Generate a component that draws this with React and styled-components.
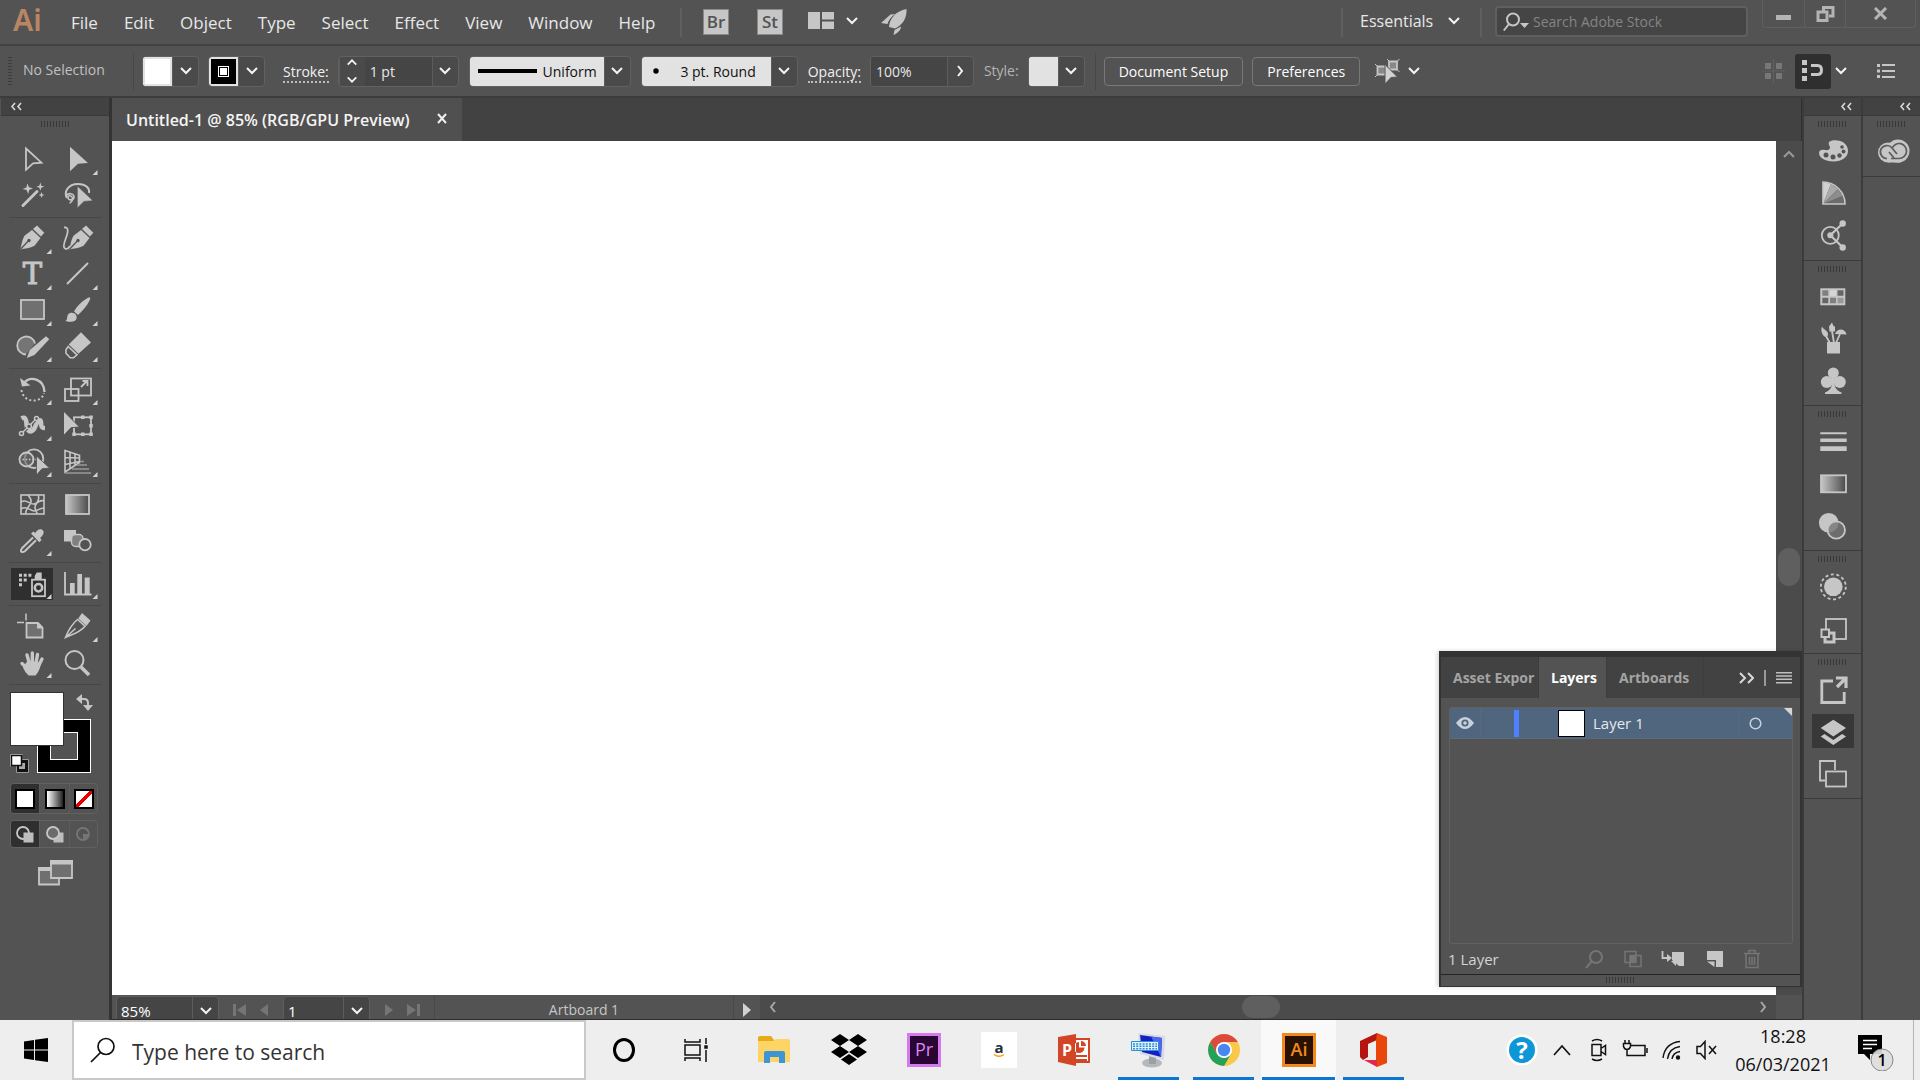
import React, { useState } from "react";
import styled, { createGlobalStyle, css } from "styled-components";

const ICON = "#c6c6c6";
const BG = "#535353";

const GlobalStyle = createGlobalStyle`
  * {
    box-sizing: border-box;
  }
  body {
    margin: 0;
    background: ${BG};
    font-family: "Open Sans", "Noto Sans", sans-serif;
    font-size: 15px;
    color: #e8e8e8;
  }
  button, input, select {
    margin: 0;
    padding: 0;
    border: none;
    border-radius: 0;
    background: none;
    color: inherit;
    font: inherit;
    outline: none;
  }
  select {
    appearance: none;
  }
  svg {
    display: block;
    flex: none;
  }
`;

const Screen = styled.div`
  display: flex;
  flex-direction: column;
  height: 100vh;
  overflow: hidden;
`;

const GradientDefs = styled.svg`
  position: absolute;
`;

/* ---------- menu bar ---------- */

const MenuBar = styled.header`
  display: flex;
  flex: none;
  height: 46px;
  border-bottom: 2px solid #424242;
`;

const AppName = styled.div`
  width: 58px;
  padding-left: 13px;
  font-family: "Noto Sans", sans-serif;
  font-size: 30px;
  font-weight: 600;
  line-height: 40px;
  color: #b98563;
`;

const MenuNav = styled.nav`
  display: flex;
  margin-right: 12px;
`;

const MenuItem = styled.button`
  padding: 0 13px;
  font-size: 17px;
`;

const MenuRule = styled.span`
  width: 2px;
  height: 29px;
  margin-top: 8px;
  background: #5f5f5f;
`;

const AppLinks = styled.div`
  display: flex;
  flex: 1;
  align-items: flex-start;
  gap: 22px;
  padding: 9px 0 0 18px;
`;

const IconButton = styled.button`
  display: flex;
  align-items: center;
  gap: ${({ $gap }) => $gap || 0}px;
  margin-left: ${({ $before }) => $before || 0}px;
`;

const Workspace = styled.label`
  display: flex;
  align-items: center;
  width: 137px;
  height: 41px;
  padding: 0 19px 0 17px;

  select {
    flex: 1;
    min-width: 0;
    font-size: 16px;
  }
`;

const StockSearch = styled.label`
  display: flex;
  align-items: center;
  width: 253px;
  height: 31px;
  margin: 6px 14px 0 13px;
  padding-left: 6px;
  gap: 4px;
  border: 2px solid #5f5f5f;
  border-radius: 4px;
  background: #454545;

  input {
    flex: 1;
    min-width: 0;
    font-size: 14px;
  }
  input::placeholder {
    color: #848484;
    opacity: 1;
  }
`;

const WindowButtons = styled.div`
  display: flex;
  height: 28px;
  margin-right: 4px;
  border: 1px solid #5f5f5f;
  border-top: none;
  border-radius: 0 0 4px 4px;
`;

const WindowButton = styled.button`
  display: flex;
  align-items: center;
  justify-content: center;
  width: ${({ $wide }) => ($wide ? 70 : 41)}px;

  & + & {
    border-left: 1px solid #5f5f5f;
  }
`;

/* ---------- control bar ---------- */

const ControlBar = styled.section`
  display: flex;
  flex: none;
  align-items: center;
  height: 52px;
  padding: 0 24px 0 8px;
  border-bottom: 2px solid #3c3c3c;
  font-size: 14px;
`;

const SideGrip = styled.span`
  width: 4px;
  height: 29px;
  background: repeating-linear-gradient(#3c3c3c 0 1px, transparent 1px 3px);
`;

const SelectionState = styled.span`
  width: 121px;
  padding: 0 0 4px 11px;
  color: #c0c0c0;
`;

const ControlRule = styled.span`
  width: 1px;
  height: 37px;
  margin-right: 8px;
  background: #474747;
`;

const Combo = styled.div`
  display: flex;
  flex: none;
  width: ${({ $width }) => $width}px;
  height: 31px;
  margin-right: ${({ $after }) => $after || 10}px;
  border: 1px solid #616161;
  border-radius: 4px;
  background: #4a4a4a;
  overflow: hidden;

  input {
    flex: 1;
    min-width: 0;
    padding-left: 5px;
    background: #454545;
  }
`;

const ComboArrow = styled.button`
  display: flex;
  flex: none;
  flex-direction: column;
  align-items: center;
  justify-content: center;
  gap: 6px;
  width: 26px;
  border-left: 1px solid #5c5c5c;
`;

const Swatch = styled.button`
  display: flex;
  align-items: center;
  justify-content: center;
  width: 29px;
  border: 2px solid #e2e2e2;
  background: ${({ $color }) => $color};
`;

const SwatchHole = styled.span`
  width: 11px;
  height: 11px;
  border: 1px solid #fff;
  background: #fff;
  box-shadow: inset 0 0 0 1px #000;
`;

const Preset = styled.label`
  display: flex;
  flex: 1;
  align-items: center;
  background: #e2e2e2;
  color: #111;

  svg {
    margin-left: 8px;
  }
  select {
    flex: 1;
    min-width: 0;
    padding-right: ${({ $end }) => $end}px;
    text-align-last: right;
  }
`;

const FieldLabel = styled.label`
  margin-right: 9px;
  line-height: 18px;
  color: ${({ $dim }) => ($dim ? "#b4b4b4" : "#f2f2f2")};
  ${({ $dim }) =>
    !$dim &&
    css`
      margin-top: 3px;
      border-bottom: 2px dotted #bdbdbd;
    `}
`;

const OutlineButton = styled.button`
  height: 29px;
  margin-right: 9px;
  padding: 0 14px;
  border: 1px solid #787878;
  border-radius: 4px;
  color: #fff;
`;

const Spacer = styled.span`
  flex: 1;
`;

const SnapButton = styled.button`
  display: flex;
  align-items: center;
  justify-content: center;
  width: 36px;
  height: 35px;
  margin: 0 3px 0 10px;
  border-radius: 3px;
  background: #2f2f2f;
`;

/* ---------- tools ---------- */

const Main = styled.main`
  display: flex;
  flex: 1;
  min-height: 0;
`;

const Tools = styled.aside`
  display: flex;
  flex: none;
  flex-direction: column;
  width: 112px;
  padding-left: 1px;
  border-right: 3px solid #333;
`;

const PanelHead = styled.button`
  display: flex;
  flex: none;
  align-items: center;
  justify-content: ${({ $end }) => ($end ? "flex-end" : "flex-start")};
  height: 18px;
  padding: 0 9px;
  background: #424242;
  border-bottom: 1px solid #3a3a3a;
`;

const Grip = styled.span`
  display: block;
  width: 29px;
  height: 6px;
  margin: ${({ $top }) => $top}px auto ${({ $bottom }) => $bottom || 0}px;
  background: repeating-linear-gradient(90deg, #383838 0 1px, transparent 1px 3px);
`;

const ToolGroup = styled.div`
  display: grid;
  grid-template-columns: 46px 46px;
  margin: 0 8px;
  padding-bottom: 3px;
  margin-bottom: 3px;
  border-bottom: 1px solid #474747;
`;

const ToolButton = styled.button`
  height: 36px;
  background: ${({ $active }) =>
    $active
      ? "linear-gradient(#2f2f2f, #2f2f2f) 2px 2px / 42px 32px no-repeat"
      : "none"};
`;

const FillStroke = styled.div`
  position: relative;
  height: 82px;
  margin: 4px 0 9px 9px;
`;

const FillBox = styled.button`
  position: absolute;
  top: 0;
  left: 0;
  width: 54px;
  height: 54px;
  border: 1px solid #333;
  background: #fff;
`;

const StrokeBox = styled.button`
  position: absolute;
  top: 27px;
  left: 27px;
  width: 54px;
  height: 54px;
  padding: 12px;
  border: 1px solid #fff;
  background: #000;

  span {
    display: block;
    height: 28px;
    border: 1px solid #fff;
    background: ${BG};
  }
`;

const SwapButton = styled.button`
  position: absolute;
  top: 2px;
  right: 16px;
`;

const DefaultButton = styled.button`
  position: absolute;
  top: 62px;
  left: 0;
`;

const Segments = styled.div`
  display: grid;
  grid-template-columns: 28px 30px 28px;
  height: ${({ $height }) => $height}px;
  margin: 0 auto 6px 9px;
  border: 1px solid #616161;
  border-radius: 4px;
  overflow: hidden;
`;

const Segment = styled.button`
  display: flex;
  align-items: center;
  justify-content: center;
  background: ${({ $active }) => ($active ? "#2f2f2f" : "none")};

  & + & {
    border-left: 1px solid #5c5c5c;
  }
`;

const PaintChip = styled.span`
  width: 20px;
  height: 20px;
  border: 2px solid #000;
  background: ${({ $paint }) => $paint};
`;

const ScreenMode = styled.button`
  align-self: center;
  margin-top: 6px;
`;

/* ---------- document ---------- */

const DocumentArea = styled.section`
  position: relative;
  display: flex;
  flex: 1;
  flex-direction: column;
  min-width: 0;
`;

const TabBar = styled.div`
  display: flex;
  flex: none;
  height: 43px;
  border-right: 1px solid #2f2f2f;
  background: #424242;
`;

const DocTab = styled.div`
  display: flex;
  align-items: center;
  justify-content: space-between;
  width: 350px;
  padding: 0 11px 0 14px;
  background: #505050;
  font-size: 16px;
  font-weight: 600;
  white-space: nowrap;
  color: #f4f4f4;
`;

const CanvasRow = styled.div`
  display: flex;
  flex: 1;
  min-height: 0;
`;

const Canvas = styled.div`
  flex: 1;
  background: #fff;
`;

const VerticalScroll = styled.div`
  display: flex;
  flex-direction: column;
  align-items: center;
  width: 26px;
  padding-top: 6px;
  background: #4b4b4b;
`;

const Thumb = styled.span`
  width: ${({ $width }) => $width}px;
  height: ${({ $height }) => $height}px;
  border-radius: 12px;
  background: #5f5f5f;
`;

const ThumbTrack = styled.div`
  display: flex;
  flex: 1;
  flex-direction: ${({ $vertical }) => ($vertical ? "column" : "row")};
  align-items: center;

  &::before {
    content: "";
    flex: ${({ $before }) => $before};
  }
  &::after {
    content: "";
    flex: ${({ $after }) => $after};
  }
`;

const StatusBar = styled.footer`
  display: flex;
  flex: none;
  height: 25px;
  padding-left: 4px;
  border-bottom: 1px solid #2d2d2d;
  overflow: hidden;
`;

const StatusField = styled.div`
  display: flex;
  width: ${({ $width }) => $width}px;
  height: 32px;
  margin-top: 1px;
  border: 1px solid #5f5f5f;
  border-radius: 4px;
  background: #454545;

  input {
    flex: 1;
    min-width: 0;
    height: 27px;
    padding-left: 4px;
    color: #fff;
  }
  button {
    height: 27px;
  }
`;

const Pager = styled.div`
  display: flex;
  align-items: center;
  gap: 13px;
  padding: 5px 14px 0;
`;

const ArtboardName = styled.div`
  width: 300px;
  border: 1px solid #4a4a4a;
  border-width: 0 1px;
  text-align: center;
  font-size: 14px;
  line-height: 29px;
  color: #c6c6c6;
`;

const StatusMenu = styled.button`
  display: flex;
  align-items: center;
  justify-content: center;
  width: 26px;
  padding-top: 5px;
`;

const HorizontalScroll = styled.div`
  display: flex;
  flex: 1;
  align-items: center;
  padding: 0 6px;
  background: #4b4b4b;
`;

const ScrollCorner = styled.div`
  width: 26px;
`;

/* ---------- layers panel ---------- */

const LayersPanel = styled.section`
  position: absolute;
  right: 0;
  bottom: 33px;
  display: flex;
  flex-direction: column;
  width: 363px;
  height: 336px;
  border: 2px solid #333;
  border-top: 6px solid #333;
  border-bottom-width: 1px;
  background: ${BG};
  box-shadow: -2px 0 4px rgba(0, 0, 0, 0.15);
`;

const PanelTabs = styled.div`
  display: flex;
  flex: none;
  align-items: center;
  height: 41px;
  background: #424242;
`;

const PanelTab = styled.button`
  width: ${({ $width }) => $width}px;
  height: 41px;
  padding-left: 12px;
  text-align: left;
  white-space: nowrap;
  font-size: 14px;
  font-weight: 700;
  color: ${({ $active }) => ($active ? "#fff" : "#a4a4a4")};
  background: ${({ $active }) => ($active ? BG : "none")};
  border-right: 1px solid #3d3d3d;
`;

const PanelActions = styled.div`
  display: flex;
  flex: 1;
  align-items: center;
  justify-content: flex-end;
  gap: 10px;
  padding-right: 8px;
`;

const LayerList = styled.div`
  flex: 1;
  margin: 9px 7px 0 8px;
  border: 1px solid #616161;
  border-radius: 3px;
`;

const LayerRow = styled.div`
  position: relative;
  display: flex;
  align-items: center;
  height: 31px;
  background: #50667e;
  border-bottom: 1px solid #5c6c7c;
  color: #e4e9ee;
`;

const EyeCell = styled.button`
  display: flex;
  align-items: center;
  justify-content: center;
  width: 31px;
  height: 29px;
  border-right: 1px solid #5b6a7a;
`;

const LayerColor = styled.span`
  width: 5px;
  height: 27px;
  margin: 0 39px 0 33px;
  background: #4f80ff;
`;

const LayerThumb = styled.span`
  width: 27px;
  height: 27px;
  margin-right: 8px;
  border: 1px solid #000;
  background: #fff;
`;

const TargetCell = styled.button`
  display: flex;
  align-items: center;
  width: 54px;
  height: 29px;
  margin-left: auto;
  padding-left: 10px;
  border-left: 1px solid #5b6a7a;
`;

const ActiveCorner = styled.span`
  position: absolute;
  top: 0;
  right: 0;
  border: 4px solid;
  border-color: #d6d6d6 #d6d6d6 transparent transparent;
`;

const LayersFooter = styled.div`
  display: flex;
  flex: none;
  align-items: center;
  gap: 17px;
  height: 31px;
  padding: 0 39px 0 7px;
  border-bottom: 1px solid #242424;
  color: #d4d4d4;

  span {
    flex: 1;
  }
`;

const PanelResize = styled.div`
  flex: none;
  height: 11px;
`;

/* ---------- docks ---------- */

const Dock = styled.aside`
  display: flex;
  flex: none;
  flex-direction: column;
  width: 59px;
  border-left: 2px solid #3b3b3b;
`;

const DockGroup = styled.div`
  display: flex;
  flex-direction: column;
  align-items: center;
  padding-bottom: 4px;
  border-bottom: 1px solid #3b3b3b;
`;

const DockGrip = styled.div`
  height: 14px;
`;

const DockButton = styled.button`
  width: 42px;
  height: 42px;
  border-radius: 3px;
  background: ${({ $active }) =>
    $active
      ? "linear-gradient(#383838, #383838) 0 4px / 42px 34px no-repeat"
      : "none"};
`;

/* ---------- taskbar ---------- */

const Taskbar = styled.footer`
  display: flex;
  flex: none;
  height: 60px;
  background: #eee;
  color: #111;
`;

const StartButton = styled.button`
  display: flex;
  align-items: center;
  justify-content: center;
  width: 72px;
`;

const TaskSearch = styled.label`
  display: flex;
  align-items: center;
  gap: 16px;
  width: 514px;
  padding-left: 16px;
  border: 2px solid #c9c9c9;
  background: #fff;

  input {
    flex: 1;
    min-width: 0;
    padding-top: 3px;
    font-size: 21px;
  }
  input::placeholder {
    color: #333;
    opacity: 1;
  }
`;

const TaskApps = styled.div`
  display: flex;
  flex: 1;
`;

const TaskApp = styled.button`
  display: flex;
  align-items: center;
  justify-content: center;
  width: 75px;
  border-top: 3px solid transparent;
  border-bottom: 3px solid transparent;
  background: ${({ $active }) => ($active ? "#f9f9f9" : "none")};
  ${({ $running, $active }) =>
    $running &&
    css`
      border-image: linear-gradient(
          90deg,
          transparent ${$active ? 1 : 7}px,
          #0c76d4 ${$active ? 1 : 7}px ${$active ? 74 : 68}px,
          transparent ${$active ? 74 : 68}px
        )
        0 0 3 0;
    `}
`;

const Tray = styled.div`
  display: flex;
  align-items: center;
  gap: 14px;
`;

const Clock = styled.time`
  display: flex;
  flex-direction: column;
  justify-content: space-around;
  width: 130px;
  padding: 2px 0;
  text-align: center;
  font-size: 18px;
  line-height: 28px;
`;

const Notifications = styled.button`
  display: flex;
  align-items: center;
  width: 66px;
  padding-left: 10px;
  margin-right: 6px;
  border-right: 1px solid #b4b4b4;
`;

/* ---------- small glyphs ---------- */

const Chevron = ({ d = "M2 3l5 5 5-5", color = "#f4f4f4", size = 14 }) => (
  <svg width={size} height={size} viewBox="0 0 14 12" fill="none" stroke={color} strokeWidth="2">
    <path d={d} />
  </svg>
);

const UP = "M2 9l5-5 5 5";
const RIGHT = "M5 1l4 5-4 5";
const LEFT = "M9 1L5 6l4 5";

const DoubleArrow = () => (
  <svg width="12" height="9" viewBox="0 0 12 9" fill="none" stroke="#d8d8d8" strokeWidth="1.6">
    <path d="M5 1L2 4.500 5 8M11 1L8 4.500 11 8" />
  </svg>
);

const Pic = ({ w, h, children, ...rest }) => (
  <svg width={w} height={h} viewBox={`0 0 ${w} ${h}`} {...rest}>
    {children}
  </svg>
);

const line = { fill: "none", stroke: ICON, strokeWidth: 1.8 };

const AppBadge = ({ text }) => (
  <Pic w={32} h={26}>
    <rect x="3.500" y="0.500" width="25" height="25" fill={ICON} stroke="#8a8a8a" />
    <text x="16" y="19" textAnchor="middle" fontSize="17" fontWeight="600" fill={BG}>
      {text}
    </text>
  </Pic>
);

/* tool drawings on a 46 x 36 cell */
const toolArt = {
  Selection: <path {...line} d="M17 6.500L32.500 20.700 24 21.400 17 27.800z" />,
  "Direct Selection": <path fill={ICON} d="M15 4.700L33 21 23 21.700 15 29.300z" />,
  "Magic Wand": (
    <g fill={ICON}>
      <path stroke={ICON} strokeWidth="3" strokeLinecap="round" d="M14 27.500L28 13.500" />
      <path d="M18.300 5.500l1.700 3.800 4 1-3.800 1.600-1 4.100-1.600-3.900-4-1 3.800-1.600zM31.300 4.500l1 3.200 3 .9-3 1.200-1 3-1-3-3-1.100 3-1zM32.500 14l.8 2.200 2 .7-2 .9-.8 2.200-.8-2.200-2-.8 2-.8z" />
    </g>
  ),
  Lasso: (
    <g>
      <path {...line} strokeWidth="2" d="M12 20c-3.500-6 1-14 11-14 8 0 12 4.500 11 9" />
      <path {...line} strokeWidth="1.600" d="M11 18c2-4 8-2.500 8 1s-6 4-6 .5 5-1.500 4.500 2S15 23 15 25.500" />
      <path fill={ICON} stroke={BG} strokeWidth=".6" d="M22.300 8L38 22.700 29 23.400 22.300 30z" />
    </g>
  ),
  Pen: (
    <g>
      <path fill={ICON} d="M11.300 28.500C12.500 24 13 19 15.500 14.800L23 9l8.500 8-6 7.700C21 27 16 27.500 11.300 28.500z" />
      <path fill={ICON} d="M28 4.500l7.300 7.200-3.400 3.800L24 8z" />
      <path stroke={BG} strokeWidth="1.300" d="M11.500 28.300l8-8.500" />
      <circle cx="20" cy="19.500" r="1.700" fill={BG} />
    </g>
  ),
  Curvature: (
    <g>
      <g transform="translate(3 0)">
        <path fill={ICON} d="M11.300 28.500C12.500 24 13 19 15.500 14.800L23 9l8.500 8-6 7.700C21 27 16 27.500 11.300 28.500z" />
        <path fill={ICON} d="M28 4.500l7.300 7.200-3.400 3.800L24 8z" />
        <path stroke={BG} strokeWidth="1.300" d="M11.500 28.300l8-8.500" />
        <circle cx="20" cy="19.500" r="1.700" fill={BG} />
      </g>
      <path {...line} d="M9 6.500c5-1 4 5 2.500 9S7 26 10 27.500s4-1 5-2.500" />
    </g>
  ),
  Type: (
    <text
      x="23.500"
      y="27"
      textAnchor="middle"
      fontFamily="DejaVu Serif"
      fontSize="29"
      fill={ICON}
      stroke={ICON}
      strokeWidth="1"
    >
      T
    </text>
  ),
  "Line Segment": <path {...line} d="M12 27L33 6" strokeWidth="2" />,
  Rectangle: <rect x="12" y="7" width="23" height="19" {...line} fill="#707070" />,
  Paintbrush: (
    <g fill={ICON}>
      <path d="M10.500 28c2.500-1.500 1-5 3-7s6-1.500 7.500 1 .5 6-3.500 6.500-5 0-7-.5z" />
      <path d="M19 18.500C23 12 28 7 34.500 4.300c1 .5.800 1.500.3 2.700C32 13 28 17.500 23 22z" />
    </g>
  ),
  Shaper: (
    <g>
      <path {...line} fill="#757575" d="M17 25.500a9 9 0 1 1 9-11" />
      <path fill={ICON} d="M17.800 28.900l3-7.800L37 7.300l3.300 3L25.500 26z" />
    </g>
  ),
  Eraser: (
    <g>
      <path fill={ICON} d="M26 3.300L36 13.500 23.500 24.800 13.700 15.500z" />
      <path {...line} strokeWidth="1.600" d="M13.200 17.500L22 25.800 18.500 28.800h-3.300L11 24.200v-3.500z" />
    </g>
  ),
  Rotate: (
    <g>
      <path {...line} strokeWidth="2.400" d="M15 11C21 3 35 7 35.500 20" />
      <path fill={ICON} d="M11 6l2 8.500 8.500-1z" />
      <path {...line} strokeWidth="2" strokeDasharray="2 2.400" d="M12.500 18c1.500 13 20 14 22.500 3" />
    </g>
  ),
  Scale: (
    <g {...line}>
      <rect x="16" y="6.500" width="20" height="17" />
      <rect x="10" y="17" width="13.500" height="12" />
      <path d="M26 15l6-6M27.500 9H32.500V14" />
    </g>
  ),
  Width: (
    <g>
      <path
        {...line}
        strokeWidth="4.500"
        strokeLinejoin="round"
        d="M12.500 10.500c4-2.500 5 2 5 6 0 5 2.500 8 5.500 6.500s3.500-6 5-8.500 3.500-3 4-.5-1 6 4 6"
      />
      <path stroke={BG} strokeWidth="3.500" d="M13 25l14-14" />
      <path {...line} strokeWidth="1.500" d="M13 25L27 11" />
      <circle cx="12.500" cy="25.500" r="2" {...line} fill={BG} strokeWidth="1.500" />
      <circle cx="20" cy="18.300" r="2.400" {...line} fill={BG} strokeWidth="1.500" />
      <circle cx="27.500" cy="10.500" r="2" {...line} fill={BG} strokeWidth="1.500" />
    </g>
  ),
  "Free Transform": (
    <g>
      <rect x="19" y="9.300" width="17" height="17" {...line} />
      <g fill={ICON}>
        <rect x="26" y="7.500" width="3.500" height="3.500" />
        <rect x="34.300" y="7.500" width="3.500" height="3.500" />
        <rect x="34.300" y="16" width="3.500" height="3.500" />
        <rect x="34.300" y="24.500" width="3.500" height="3.500" />
        <rect x="26" y="24.500" width="3.500" height="3.500" />
        <rect x="17.300" y="24.500" width="3.500" height="3.500" />
      </g>
      <path fill={ICON} stroke={BG} d="M8.500 3L24.500 19 16 19.700 8.500 27.700z" />
    </g>
  ),
  "Shape Builder": (
    <g>
      <circle cx="25" cy="14.700" r="9.300" {...line} />
      <circle cx="17.500" cy="15.500" r="7" {...line} fill="#6b6b6b" fillOpacity=".6" />
      <path stroke={ICON} strokeWidth="1.600" strokeDasharray="1.600 1.600" d="M13.500 15.500h14" />
      <path fill={ICON} stroke={BG} strokeWidth=".8" d="M27.500 12L40.500 24 33 24.800 27.500 31z" />
    </g>
  ),
  "Perspective Grid": (
    <g {...line} strokeWidth="1.600">
      <path d="M10 6.500L24.500 11.300V18.500L10 28z M10 13.500l14.500.5M10 20.500l14.500-3M15 8v17M20 9.800V21" />
      <path stroke="#999" strokeWidth="1.400" d="M25 17.500h4M22 21h10M17 25h17M10 29h26" />
    </g>
  ),
  Mesh: (
    <g {...line} strokeWidth="1.600">
      <rect x="12" y="8" width="23" height="19" />
      <path d="M12 15c6-4 8 3 13 2s6-5 10-3M12 22c6-4 9 2 13 2s5-3 10-3M19 8c5 6 3 8 1 11s-4 5-3 8M29 8c3 6-3 8-3 12s2 4 2 7" />
    </g>
  ),
  Gradient: <rect x="11" y="8" width="23" height="19" {...line} fill="url(#toolGradient)" />,
  Eyedropper: (
    <g>
      <path {...line} strokeWidth="2" strokeLinejoin="round" d="M24 14.500L13 25.200c-1 1.500-1.500 3-.5 3.600s2.300.2 3.500-.8l11-10.700" />
      <path fill={ICON} d="M22 10.500l2.300-2 1.800 1.500c2-3 4.500-4.500 7-3.300 2.600 1.500 2 4.800-2 8.300l1.500 2-2.300 2.200z" />
    </g>
  ),
  Blend: (
    <g>
      <rect x="9" y="7" width="12" height="11.500" fill={ICON} />
      <rect x="16.500" y="11.500" width="11.500" height="12" rx="4" {...line} fill="#808080" strokeWidth="1.500" />
      <circle cx="30" cy="21.700" r="5.700" {...line} fill={BG} />
    </g>
  ),
  "Symbol Sprayer": (
    <g fill={ICON}>
      <path d="M10 7.700h3v3h-3zM14.700 7.700h3v3h-3zM19.400 7.700h3v3h-3zM10 12.500h3v3h-3zM14.700 12.500h3v3h-3zM10 17.300h3v3h-3z" />
      <path d="M25.700 10l2-3.500h5V13h-7z" />
      <rect x="23" y="13.700" width="13" height="16.500" {...line} />
      <circle cx="29.500" cy="21.700" r="3.700" {...line} strokeWidth="2.500" />
    </g>
  ),
  "Column Graph": (
    <g fill={ICON}>
      <path {...line} d="M10 6v22.500h26.500" />
      <path d="M15 17h4.700v11H15zM22.300 8H27v20h-4.700zM29.700 11.500h5V28h-5z" />
    </g>
  ),
  Artboard: (
    <g>
      <path {...line} strokeWidth="1.500" d="M17 4.500v7M8 13.500h7" />
      <path {...line} fill="#707070" d="M17.500 14h11.500l4.500 4.500V28.500h-16z" />
      <path fill={ICON} d="M28 13.500v6h6z" />
    </g>
  ),
  Slice: (
    <g>
      <path fill={ICON} d="M27 4l8.500 7.500-4 5.500-8.300-7.500z" />
      <path {...line} strokeWidth="1.600" d="M22.500 10.500l7.500 6.700C25.500 23 17.500 25.500 10.500 28.500 13 22 17 15 22.500 10.500zM10.500 28.500l10-9" />
    </g>
  ),
  Hand: (
    <g fill="none" stroke={ICON} strokeWidth="3.400" strokeLinecap="round" strokeLinejoin="round">
      <path d="M18 10l2.500 9M23.300 8v10M28.500 9.500L27 18M33 14l-3.500 7M13 18.500l5.500 5" />
      <path fill={ICON} strokeWidth="2" d="M18.500 17.500h10l2 3c-1 4-2.500 7-4.500 9h-6c-2.500-2-4-4.500-5-7z" />
    </g>
  ),
  Zoom: (
    <g {...line} strokeWidth="2">
      <circle cx="19.500" cy="15" r="9" />
      <path strokeWidth="3.500" d="M26 22l8 8" />
    </g>
  ),
};

const noCorner = ["Selection", "Magic Wand", "Lasso", "Curvature", "Free Transform", "Mesh", "Gradient", "Blend", "Artboard", "Zoom"];

const toolGroups = [
  ["Selection", "Direct Selection", "Magic Wand", "Lasso"],
  ["Pen", "Curvature", "Type", "Line Segment", "Rectangle", "Paintbrush", "Shaper", "Eraser"],
  ["Rotate", "Scale", "Width", "Free Transform", "Shape Builder", "Perspective Grid"],
  ["Mesh", "Gradient", "Eyedropper", "Blend"],
  ["Symbol Sprayer", "Column Graph"],
  ["Artboard", "Slice", "Hand", "Zoom"],
];

/* dock drawings on a 42 x 42 cell */
const dockArt = {
  Color: (
    <g>
      <path fill={ICON} d="M17 12c2-1.500 5-2 8-1.500 7 .5 11 5 11 10.500 0 6-6 10.500-14.500 10.500C13 31.500 7 27.500 7 23c0-3 3-3.500 6-3 3 .5 5-.5 5-2.500 0-1.500-2-3-1-5.500z" />
      <g fill={BG}>
        <circle cx="14" cy="25" r="2.500" />
        <circle cx="21" cy="27" r="2.500" />
        <circle cx="27.500" cy="25.500" r="2.200" />
        <circle cx="31.500" cy="21.500" r="2" />
        <circle cx="30" cy="17" r="1.800" />
      </g>
    </g>
  ),
  "Color Guide": (
    <g>
      <path fill="#d0d0d0" d="M11 32V10l8 2z" />
      <path fill="#aaa" d="M11 32l8-20 7 5z" />
      <path fill="#8c8c8c" d="M11 32l15-15 5 7z" />
      <path fill="#6c6c6c" d="M11 32l20-8 2 8z" />
      <path {...line} strokeWidth="1.600" d="M11 10c12 0 22 10 22 22H11z" />
    </g>
  ),
  "Color Themes": (
    <g>
      <circle cx="18.300" cy="21.300" r="8.500" {...line} />
      <path {...line} strokeWidth="2.200" d="M18.300 21.300L30.700 9.500M18.300 21.300l12.400 12" />
      <g fill={ICON}>
        <circle cx="18.300" cy="21.300" r="3" />
        <circle cx="30.700" cy="9.500" r="3.200" />
        <circle cx="30.700" cy="33.500" r="3.200" />
      </g>
    </g>
  ),
  Swatches: (
    <g>
      <path fill={ICON} d="M8.300 13.300h25v17h-25z" />
      <path fill="#808080" d="M10.300 15.300h6v5.500h-6zM18 22.800h6v5.500h-6z" />
      <path fill="#666" d="M25.500 15.300h6v5.500h-6zM10.300 22.800h6v5.500h-6z" />
      <path fill="#d6d6d6" d="M18 15.300h6v5.500h-6z" />
      <path fill="#999" d="M25.500 22.800h6v5.500h-6z" />
    </g>
  ),
  Brushes: (
    <g fill={ICON}>
      <path d="M15 25h13v11.500H15z" />
      <path {...line} d="M14 19l4.500 8M20 14l2 12M28 17l-4 9" />
      <path d="M10 9.500c1 3 6 4 6 7.500s-3 4-5 1-2-6-1-8.500zM17 9.500l3-4 1.500 3.500 1.500.5v5h-5.500zM23 17c1-4 6-6 9-3.500 1.500 1.500 2 2 2.500 4z" />
    </g>
  ),
  Symbols: (
    <g fill={ICON}>
      <circle cx="21.300" cy="14" r="5.500" />
      <circle cx="14.800" cy="23" r="6" />
      <circle cx="27.800" cy="23" r="6" />
      <path d="M18.500 17h5.600L22.500 22c0 5 .5 9 7 11.500v1.500H13v-1.500c6.500-2.500 7-6.500 7-11.500z" />
    </g>
  ),
  Stroke: <path fill={ICON} d="M8.300 12.300h26.400v2H8.300zM8.300 18.500h26.400v3.500H8.300zM8.300 26.300h26.400V31H8.300z" />,
  Gradient: <rect x="9" y="13.300" width="25" height="17" {...line} fill="url(#toolGradient)" />,
  Transparency: (
    <g>
      <circle cx="16.700" cy="18.700" r="9.800" fill={ICON} />
      <circle cx="24.300" cy="26" r="8.700" {...line} fill="#747474" fillOpacity=".8" />
    </g>
  ),
  Appearance: (
    <g>
      <circle cx="21.300" cy="21.800" r="9.300" fill={ICON} />
      <circle cx="21.300" cy="21.800" r="12.500" {...line} strokeDasharray="3 2.600" />
    </g>
  ),
  "Graphic Styles": (
    <g>
      <rect x="14" y="12" width="20" height="20" {...line} />
      <rect x="13" y="26" width="9" height="9" fill={BG} stroke={ICON} strokeWidth="3" />
      <rect x="9.500" y="22.500" width="7.500" height="7.500" fill={BG} stroke={ICON} strokeWidth="2" />
    </g>
  ),
  "Asset Export": (
    <g fill="none" stroke={ICON} strokeWidth="2.800">
      <path d="M21 13H9.800v21.500h22.400V24" />
      <path strokeWidth="3.200" d="M24 10h10v10M33.500 10.500L25 19" />
    </g>
  ),
  Layers: (
    <g fill={ICON}>
      <path d="M21.300 9.700L34 18l-12.700 8.500L8.700 18z" />
      <path d="M8.700 26.500l3.800-2.400 8.800 5.900 8.900-5.900 3.800 2.400L21.300 35z" />
    </g>
  ),
  Artboards: (
    <g {...line}>
      <path d="M13 28.500H8V9h15v9" />
      <rect x="14" y="19.500" width="20" height="15" />
    </g>
  ),
};

const dockGroups = [
  ["Color", "Color Guide", "Color Themes"],
  ["Swatches", "Brushes", "Symbols"],
  ["Stroke", "Gradient", "Transparency"],
  ["Appearance", "Graphic Styles"],
  ["Asset Export", "Layers", "Artboards"],
];

const taskApps = [
  {
    name: "Cortana",
    art: (
      <Pic w={24} h={26}>
        <ellipse cx="12" cy="13" rx="9.500" ry="10.500" fill="none" stroke="#000" strokeWidth="3" />
      </Pic>
    ),
  },
  {
    name: "Task View",
    art: (
      <Pic w={30} h={24} fill="none" stroke="#111" strokeWidth="1.500">
        <path d="M1 1v3h15V1M1 23v-3h15v3M1 7h15v10H1zM22 0v6M22 12v12" />
        <path fill="#111" d="M21 8h2v2h-2z" />
      </Pic>
    ),
  },
  {
    name: "File Explorer",
    art: (
      <Pic w={34} h={30}>
        <path fill="#e8ab17" d="M1 3q0-2 2-2h11l3 4v4H1z" />
        <path fill="#fdd466" d="M1 6h15l3-2h12q2 0 2 2v21H1z" />
        <path fill="#3d95d6" d="M7 28V18q0-2 2-2h17q2 0 2 2v10h-6v-6h-9v6z" />
      </Pic>
    ),
  },
  {
    name: "Dropbox",
    art: (
      <Pic w={36} h={32}>
        <path d="M9 0l9 6-9 6-9-6zM27 0l9 6-9 6-9-6zM9 12l9 6-9 6-9-6zM27 12l9 6-9 6-9-6zM18 20l8 5.500-8 5.500-8-5.500z" />
      </Pic>
    ),
  },
  {
    name: "Premiere Pro",
    art: (
      <Pic w={34} h={34}>
        <rect x="1.500" y="1.500" width="31" height="31" fill="#2a0634" stroke="#d679ee" strokeWidth="3" />
        <text x="17" y="23" textAnchor="middle" fontSize="18" fill="#d988ef">Pr</text>
      </Pic>
    ),
  },
  {
    name: "Amazon",
    art: (
      <Pic w={36} h={36}>
        <path fill="#fff" d="M0 0h36v36H0z" />
        <text x="18" y="21" textAnchor="middle" fontSize="15" fontWeight="700" fill="#222f3e">a</text>
        <path fill="none" stroke="#f90" strokeWidth="1.500" d="M13 22.500q5 3.500 10 0" />
      </Pic>
    ),
  },
  {
    name: "PowerPoint",
    art: (
      <Pic w={34} h={34}>
        <path fill="#fff" stroke="#d24625" strokeWidth="2" d="M17 6h15v23H17z" />
        <path fill="#d24625" d="M22 9a5.500 5.500 0 1 0 5.500 5.500H22zM24 8v5h5a5 5 0 0 0-5-5zM19 22h11v2H19zM19 26h11v2H19zM1 4l18-3v32L1 29z" />
        <text x="10" y="23" textAnchor="middle" fontSize="16" fontWeight="700" fill="#fff">P</text>
      </Pic>
    ),
  },
  {
    name: "On-Screen Keyboard",
    running: true,
    art: (
      <Pic w={36} h={36}>
        <ellipse cx="21" cy="31" rx="10" ry="4.500" fill="#b5b9bd" />
        <path fill="#9aa0a6" d="M18 24h7v8h-7z" />
        <path fill="#d7dce2" d="M7 1l27 3-1 24-24-6z" />
        <path fill="#1420c4" d="M9 3l22 3-1 19-19-5z" />
        <path fill="#5066f0" d="M20 4.500l11 1.500-1 19z" />
        <path fill="#dff2ff" stroke="#2e8fd8" d="M.5 9.500h27v9H.5z" />
        <path stroke="#2e8fd8" strokeWidth="1.500" strokeDasharray="2 1.200" d="M2 12h24M2 14.300h24M2 16.700h24" />
      </Pic>
    ),
  },
  {
    name: "Chrome",
    running: true,
    art: (
      <Pic w={34} h={34}>
        <circle cx="17" cy="17" r="16" fill="#fbc94a" />
        <path fill="#dc4a3d" d="M3.200 9A16 16 0 0 1 30.900 9H17l-6.900 12z" />
        <path fill="#23a05a" d="M3.200 9A16 16 0 0 0 17 33l7-12-7 4-7-4z" />
        <circle cx="17" cy="17" r="8" fill="#fff" />
        <circle cx="17" cy="17" r="6.200" fill="#4a86f0" />
      </Pic>
    ),
  },
  {
    name: "Illustrator",
    running: true,
    active: true,
    art: (
      <Pic w={34} h={34}>
        <rect x="1.500" y="1.500" width="31" height="31" fill="#2a1203" stroke="#f08a1d" strokeWidth="3" />
        <text x="17" y="23" textAnchor="middle" fontSize="18" fontWeight="600" fill="#f08a1d">Ai</text>
      </Pic>
    ),
  },
  {
    name: "Office",
    running: true,
    art: (
      <Pic w={30} h={36}>
        <path fill="#b5150d" d="M1 9L18 1v7l-9 4v13l-5 3-3-3z" />
        <path fill="#e8460a" d="M18 1l10 4v26l-10 4-1-6V8z" />
        <path fill="#e0274c" d="M5 28h13v7z" />
      </Pic>
    ),
  },
];

function ToolPanel() {
  const [tool, setTool] = useState("Symbol Sprayer");
  return (
    <Tools>
      <PanelHead aria-label="Collapse tools">
        <DoubleArrow />
      </PanelHead>
      <Grip $top={5} $bottom={15} />
      {toolGroups.map((group) => (
        <ToolGroup key={group[0]}>
          {group.map((name) => (
            <ToolButton key={name} $active={name === tool} aria-label={name} onClick={() => setTool(name)}>
              <Pic w={46} h={36}>
                {toolArt[name]}
                {!noCorner.includes(name) && <path fill="#d2d2d2" d="M42.500 28v5H37.500z" />}
              </Pic>
            </ToolButton>
          ))}
        </ToolGroup>
      ))}
      <FillStroke>
        <StrokeBox aria-label="Stroke colour">
          <span />
        </StrokeBox>
        <FillBox aria-label="Fill colour" />
        <SwapButton aria-label="Swap fill and stroke">
          <Pic w={17} h={17}>
            <path {...line} strokeWidth="2" d="M5 5h3q4 0 4 4v3" />
            <path fill={ICON} d="M0 5l6-5v10zM7 11h10l-5 6z" />
          </Pic>
        </SwapButton>
        <DefaultButton aria-label="Default fill and stroke">
          <Pic w={19} h={19}>
            <path fill="#111" stroke="#999" d="M6.500 5.500h12v13h-12z" />
            <path fill="#aaa" d="M9 9h6v6H9z" />
            <path fill="#fff" stroke="#111" strokeWidth="1.500" d="M1.500 1.500h10v10h-10z" />
            <path fill="none" stroke="#999" d="M.5 12.500V.5h12" />
          </Pic>
        </DefaultButton>
      </FillStroke>
      <Segments $height={31}>
        <Segment $active aria-label="Color">
          <PaintChip $paint="#fff" />
        </Segment>
        <Segment aria-label="Gradient">
          <PaintChip $paint="linear-gradient(90deg, #fff, #222)" />
        </Segment>
        <Segment aria-label="None">
          <PaintChip $paint="linear-gradient(135deg, #fff 41%, #e80000 41% 59%, #fff 59%)" />
        </Segment>
      </Segments>
      <Segments $height={28}>
        <Segment $active aria-label="Draw Normal">
          <Pic w={18} h={17}>
            <circle cx="7" cy="7" r="6" {...line} />
            <path fill="#bdbdbd" d="M7.500 6.500h10v10h-10z" />
          </Pic>
        </Segment>
        <Segment aria-label="Draw Behind">
          <Pic w={18} h={17}>
            <path fill="#bdbdbd" d="M7.500 6.500h10v10h-10z" />
            <circle cx="7" cy="7" r="6" {...line} fill="#6b6b6b" />
          </Pic>
        </Segment>
        <Segment aria-label="Draw Inside" disabled>
          <Pic w={18} h={17}>
            <circle cx="8" cy="8" r="6" fill="none" stroke="#757575" strokeWidth="1.800" />
            <path fill="#757575" d="M8 8h6q-1 5-6 6z" />
          </Pic>
        </Segment>
      </Segments>
      <ScreenMode aria-label="Change screen mode">
        <Pic w={35} h={26}>
          <path {...line} fill="#707070" d="M1 8h20v16.500H1z" />
          <path fill={ICON} d="M0 7h21v4H0z" />
          <path {...line} fill="#707070" d="M13 1h21v17H13z" />
          <path fill={ICON} d="M12 0h23v4.500H12z" />
        </Pic>
      </ScreenMode>
    </Tools>
  );
}

function Layers() {
  return (
    <LayersPanel>
      <PanelTabs>
        <PanelTab $width={98}>Asset Expor</PanelTab>
        <PanelTab $width={68} $active>Layers</PanelTab>
        <PanelTab $width={97}>Artboards</PanelTab>
        <PanelActions>
          <IconButton aria-label="Collapse panel">
            <Pic w={15} h={12} fill="none" stroke="#d8d8d8" strokeWidth="2">
              <path d="M1 1l5 5-5 5M9 1l5 5-5 5" />
            </Pic>
          </IconButton>
          <Pic w={2} h={16}>
            <path fill="#999" d="M0 0h2v16H0z" />
          </Pic>
          <IconButton aria-label="Panel menu">
            <Pic w={16} h={12}>
              <path fill="#c0c0c0" d="M0 0h16v1.500H0zM0 3.300h16v1.500H0zM0 6.600h16v1.500H0zM0 10h16v1.500H0z" />
            </Pic>
          </IconButton>
        </PanelActions>
      </PanelTabs>
      <LayerList>
        <LayerRow>
          <EyeCell aria-label="Toggle visibility">
            <Pic w={20} h={12}>
              <path fill="#c9d2da" d="M1 6q9-12 18 0-9 12-18 0z" />
              <circle cx="10" cy="6" r="3.600" fill="#50667e" />
              <circle cx="10" cy="6" r="1.800" fill="#c9d2da" />
            </Pic>
          </EyeCell>
          <LayerColor />
          <LayerThumb />
          Layer 1
          <TargetCell aria-label="Target layer">
            <Pic w={13} h={13}>
              <circle cx="6.500" cy="6.500" r="5.300" fill="none" stroke="#c9d2da" strokeWidth="1.500" />
            </Pic>
          </TargetCell>
          <ActiveCorner />
        </LayerRow>
      </LayerList>
      <LayersFooter>
        <span>1 Layer</span>
        <IconButton aria-label="Locate object">
          <Pic w={22} h={20} fill="none" stroke="#757575" strokeWidth="2">
            <circle cx="13" cy="8" r="6" />
            <path d="M9 12l-6 7" />
          </Pic>
        </IconButton>
        <IconButton aria-label="Make clipping mask">
          <Pic w={22} h={20}>
            <path fill="none" stroke="#757575" strokeWidth="1.500" d="M3 2.500h11v11H3zM8 6.500h11v11H8z" />
            <path fill="#757575" d="M8 6.500h6v7H8z" />
          </Pic>
        </IconButton>
        <IconButton aria-label="Create new sublayer">
          <Pic w={24} h={20}>
            <path fill={ICON} d="M11 3h12v14h-5l-7-6z" />
            <path fill={ICON} d="M10 12l5 5v-5z" />
            <path {...line} d="M1.500 2v7h6" />
            <path fill={ICON} d="M6 5l5 4-5 4z" />
          </Pic>
        </IconButton>
        <IconButton aria-label="Create new layer">
          <Pic w={24} h={20}>
            <path fill={ICON} d="M5 2h16v16h-7v-7H5z" />
            <path fill={ICON} d="M5 12.500h7.500V18z" />
          </Pic>
        </IconButton>
        <IconButton aria-label="Delete selection">
          <Pic w={18} h={20} fill="none" stroke="#757575" strokeWidth="1.500">
            <path d="M1 4.500h16M6 4V1.500h6V4M3 5v13.500h12V5M6.500 8v8M9 8v8M11.500 8v8" />
          </Pic>
        </IconButton>
      </LayersFooter>
      <PanelResize>
        <Grip $top={2} />
      </PanelResize>
    </LayersPanel>
  );
}

function App() {
  return (
    <Screen>
      <GlobalStyle />
      <GradientDefs width="0" height="0">
        <defs>
          <linearGradient id="toolGradient">
            <stop offset="0" stopColor="#c6c6c6" />
            <stop offset="1" stopColor="#4b4b4b" />
          </linearGradient>
        </defs>
      </GradientDefs>

      <MenuBar>
        <AppName>Ai</AppName>
        <MenuNav>
          {["File", "Edit", "Object", "Type", "Select", "Effect", "View", "Window", "Help"].map((m) => (
            <MenuItem key={m}>{m}</MenuItem>
          ))}
        </MenuNav>
        <MenuRule />
        <AppLinks>
          <IconButton aria-label="Bridge">
            <AppBadge text="Br" />
          </IconButton>
          <IconButton aria-label="Stock">
            <AppBadge text="St" />
          </IconButton>
          <IconButton aria-label="Arrange documents" $gap={11}>
            <Pic w={26} h={24}>
              <path fill={ICON} d="M0 3h12v17H0zM14 3h12v7.500H14zM14 12.500h12V20H14z" />
            </Pic>
            <Chevron />
          </IconButton>
          <IconButton aria-label="GPU preview">
            <Pic w={26} h={26}>
              <path fill={ICON} d="M25.500 0C26 9 22 15.500 14 19.500L8 18C8.500 9 15 2 25.500 0z" />
              <path fill={ICON} d="M9.500 5.500L14 5C10 8 7.500 11 6.500 15L0 14zM13.500 21l6.500-3.500C20 21 17 24 12.500 26z" />
            </Pic>
          </IconButton>
        </AppLinks>
        <MenuRule />
        <Workspace>
          <select aria-label="Workspace">
            <option>Essentials</option>
          </select>
          <Chevron />
        </Workspace>
        <MenuRule />
        <StockSearch>
          <Pic w={26} h={20} fill="none" stroke={ICON} strokeWidth="2">
            <circle cx="10" cy="7.500" r="6" />
            <path d="M6 12L.8 18.500" />
            <path fill={ICON} stroke="none" d="M17 11h9l-4.500 5z" />
          </Pic>
          <input aria-label="Search Adobe Stock" placeholder="Search Adobe Stock" />
        </StockSearch>
        <WindowButtons>
          <WindowButton aria-label="Minimize">
            <Pic w={15} h={13}>
              <path fill="#b4b4b4" d="M0 8h15v5H0z" />
            </Pic>
          </WindowButton>
          <WindowButton aria-label="Restore">
            <Pic w={19} h={16} fill="none" stroke="#b4b4b4" strokeWidth="3">
              <path d="M7.500 5V1.500h9.500v8.500h-4M2 6h9v8.500H2z" />
            </Pic>
          </WindowButton>
          <WindowButton aria-label="Close" $wide>
            <Pic w={15} h={13} stroke="#b4b4b4" strokeWidth="3">
              <path d="M2 1l11 11M13 1L2 12" />
            </Pic>
          </WindowButton>
        </WindowButtons>
      </MenuBar>

      <ControlBar>
        <SideGrip />
        <SelectionState>No Selection</SelectionState>
        <ControlRule />
        <Combo $width={57} $after={9}>
          <Swatch $color="#fff" aria-label="Fill" />
          <ComboArrow aria-label="Fill options">
            <Chevron />
          </ComboArrow>
        </Combo>
        <Combo $width={57} $after={18}>
          <Swatch $color="#000" aria-label="Stroke">
            <SwatchHole />
          </Swatch>
          <ComboArrow aria-label="Stroke options">
            <Chevron />
          </ComboArrow>
        </Combo>
        <FieldLabel htmlFor="weight">Stroke:</FieldLabel>
        <Combo $width={121}>
          <ComboArrow aria-label="Step weight">
            <Chevron d={UP} size={12} />
            <Chevron size={12} />
          </ComboArrow>
          <input id="weight" defaultValue="1 pt" />
          <ComboArrow aria-label="Weight presets">
            <Chevron />
          </ComboArrow>
        </Combo>
        <Combo $width={162}>
          <Preset $end={7}>
            <Pic w={59} h={4}>
              <path d="M0 0h59v4H0z" />
            </Pic>
            <select aria-label="Width profile">
              <option>Uniform</option>
            </select>
          </Preset>
          <ComboArrow aria-label="Width profiles">
            <Chevron />
          </ComboArrow>
        </Combo>
        <Combo $width={157}>
          <Preset $end={15}>
            <Pic w={12} h={6}>
              <circle cx="6" cy="3" r="2.700" />
            </Pic>
            <select aria-label="Brush definition">
              <option>3 pt. Round</option>
            </select>
          </Preset>
          <ComboArrow aria-label="Brush definitions">
            <Chevron />
          </ComboArrow>
        </Combo>
        <FieldLabel htmlFor="opacity">Opacity:</FieldLabel>
        <Combo $width={104}>
          <input id="opacity" defaultValue="100%" />
          <ComboArrow aria-label="Opacity slider">
            <Chevron d={RIGHT} />
          </ComboArrow>
        </Combo>
        <FieldLabel as="span" $dim>
          Style:
        </FieldLabel>
        <Combo $width={57}>
          <Swatch $color="#e2e2e2" aria-label="Graphic style" />
          <ComboArrow aria-label="Graphic styles">
            <Chevron />
          </ComboArrow>
        </Combo>
        <ControlRule />
        <OutlineButton>Document Setup</OutlineButton>
        <OutlineButton>Preferences</OutlineButton>
        <IconButton aria-label="Select similar" $gap={6} $before={6}>
          <Pic w={26} h={26}>
            <path {...line} fill="#888" d="M2.500 8.500h8v8h-8zM14 3.500h8v8h-8z" />
            <path {...line} strokeWidth="1" d="M0 6l3 3M0 19l3-3M12 1l3 3M24.500 1l-3 3M24.500 14l-3-3" />
            <path fill="#d2d2d2" stroke={BG} d="M10 6.500L22.500 19 16 19.500 10 26z" />
          </Pic>
          <Chevron />
        </IconButton>
        <Spacer />
        <Pic w={23} h={24}>
          <path fill="#777" d="M3 4h6v6H3zM14 4h6v6h-6zM3 14h6v6H3zM14 14h6v6h-6z" />
          <path stroke="#616161" d="M11.500 0v24M0 12h23" />
        </Pic>
        <SnapButton aria-label="Snap options">
          <Pic w={22} h={22}>
            <path fill={ICON} d="M0 0h5v5H0zM0 8h5v5H0zM0 16h5v5H0z" />
            <path fill="none" stroke={ICON} strokeWidth="3" d="M9 5.500h6.500q4 0 4 4.500t-4 4.500H9" />
          </Pic>
        </SnapButton>
        <Chevron />
        <IconButton aria-label="Control bar menu" $before={29}>
          <Pic w={19} h={14}>
            <path fill={ICON} d="M0 0h3v3H0zM5 0h13v2H5zM0 5.500h3v3H0zM5 6h13v2H5zM0 11h3v3H0zM5 12h13v2H5z" />
          </Pic>
        </IconButton>
      </ControlBar>

      <Main>
        <ToolPanel />

        <DocumentArea>
          <TabBar>
            <DocTab>
              Untitled-1 @ 85% (RGB/GPU Preview)
              <IconButton aria-label="Close tab">
                <Pic w={16} h={14} stroke="#f0f0f0" strokeWidth="2">
                  <path d="M3 1l8 9M11 1L3 10" />
                </Pic>
              </IconButton>
            </DocTab>
          </TabBar>
          <CanvasRow>
            <Canvas />
            <VerticalScroll>
              <Chevron d={UP} color="#999" />
              <ThumbTrack $vertical $before={387} $after={409}>
                <Thumb $width={22} $height={38} />
              </ThumbTrack>
            </VerticalScroll>
          </CanvasRow>
          <StatusBar>
            <StatusField $width={103}>
              <input aria-label="Zoom level" defaultValue="85%" />
              <ComboArrow aria-label="Zoom presets">
                <Chevron />
              </ComboArrow>
            </StatusField>
            <Pager>
              <Pic w={14} h={12} fill="#757575">
                <path d="M0 0h3v12H0zM13 0v12L4 6z" />
              </Pic>
              <Pic w={9} h={12} fill="#757575">
                <path d="M8 0v12L0 6z" />
              </Pic>
            </Pager>
            <StatusField $width={87}>
              <input aria-label="Artboard number" defaultValue="1" />
              <ComboArrow aria-label="Artboard list">
                <Chevron />
              </ComboArrow>
            </StatusField>
            <Pager>
              <Pic w={9} h={12} fill="#757575">
                <path d="M1 0v12l8-6z" />
              </Pic>
              <Pic w={14} h={12} fill="#757575">
                <path d="M11 0h3v12h-3zM1 0v12l9-6z" />
              </Pic>
            </Pager>
            <ArtboardName>Artboard 1</ArtboardName>
            <StatusMenu aria-label="Status bar options">
              <Pic w={9} h={14}>
                <path fill="#d2d2d2" d="M0 0v14l8-7z" />
              </Pic>
            </StatusMenu>
            <HorizontalScroll>
              <Chevron d={LEFT} color="#a8a8a8" />
              <ThumbTrack $before={461} $after={475}>
                <Thumb $width={38} $height={22} />
              </ThumbTrack>
              <Chevron d={RIGHT} color="#a8a8a8" />
            </HorizontalScroll>
            <ScrollCorner />
          </StatusBar>
          <Layers />
        </DocumentArea>

        <Dock>
          <PanelHead $end aria-label="Expand panels">
            <DoubleArrow />
          </PanelHead>
          {dockGroups.map((group) => (
            <DockGroup key={group[0]}>
              <DockGrip>
                <Grip $top={5} />
              </DockGrip>
              {group.map((name) => (
                <DockButton key={name} $active={name === "Layers"} aria-label={name}>
                  <Pic w={42} h={42}>{dockArt[name]}</Pic>
                </DockButton>
              ))}
            </DockGroup>
          ))}
        </Dock>
        <Dock>
          <PanelHead $end aria-label="Expand libraries">
            <DoubleArrow />
          </PanelHead>
          <DockGroup>
            <DockGrip>
              <Grip $top={5} />
            </DockGrip>
            <DockButton aria-label="Libraries">
              <Pic w={42} h={42}>
                <circle cx="17" cy="22.500" r="10" fill={ICON} />
                <circle cx="27" cy="21" r="11.500" fill={ICON} />
                <path fill={ICON} d="M17 22h12v10.500H17z" />
                <path fill="none" stroke="#5c5c5c" strokeWidth="1.700" d="M16 28.500a6.500 6.500 0 1 1 5-10.500l5 6M20 28.500h8a7.500 7.500 0 1 0-7-10M23 28l-5-6" />
              </Pic>
            </DockButton>
          </DockGroup>
        </Dock>
      </Main>

      <Taskbar>
        <StartButton aria-label="Start">
          <Pic w={24} h={24}>
            <path d="M0 3.500L10 2v9.500H0zM11 1.800L24 0v11.500H11zM0 12.500h10V22L0 20.500zM11 12.500h13V24l-13-1.800z" />
          </Pic>
        </StartButton>
        <TaskSearch>
          <Pic w={26} h={26} fill="none" stroke="#111" strokeWidth="1.700">
            <circle cx="16" cy="9.500" r="8" />
            <path d="M10.500 15.500L1 25" />
          </Pic>
          <input aria-label="Search" placeholder="Type here to search" />
        </TaskSearch>
        <TaskApps>
          {taskApps.map((app) => (
            <TaskApp key={app.name} $running={app.running} $active={app.active} aria-label={app.name}>
              {app.art}
            </TaskApp>
          ))}
        </TaskApps>
        <Tray>
          <IconButton aria-label="Help">
            <Pic w={32} h={32}>
              <circle cx="16" cy="16" r="15.500" fill="#fff" />
              <circle cx="16" cy="16" r="13" fill="#0d96d8" />
              <text x="16" y="25" textAnchor="middle" fontSize="24" fontWeight="700" fill="#fff">?</text>
            </Pic>
          </IconButton>
          <IconButton aria-label="Show hidden icons">
            <Pic w={20} h={12} fill="none" stroke="#111" strokeWidth="1.700">
              <path d="M2 11l8-9 8 9" />
            </Pic>
          </IconButton>
          <IconButton aria-label="Meet now">
            <Pic w={22} h={24} fill="none" stroke="#111" strokeWidth="1.500">
              <path d="M6 6.500h9v11H6zM15 10.500l4.500-3v9l-4.500-3M6 3q5-3 10 0M6 21q5 3 10 0" />
            </Pic>
          </IconButton>
          <IconButton aria-label="Battery">
            <Pic w={26} h={22} fill="none" stroke="#111" strokeWidth="1.500">
              <path d="M8 6.500h15v10H5v-5M25 9v5M3 1v4M7 1v4M1.500 4.500h7v3q-1 3-3.500 3t-3.500-3zM5 11v4" />
            </Pic>
          </IconButton>
          <IconButton aria-label="Network">
            <Pic w={20} h={22} fill="none" stroke="#111" strokeWidth="1.400">
              <path d="M1 19Q3 4 18 2.500M5.500 20Q7 9 18 7.500M10 20Q11 13.500 18 12.500" />
              <circle cx="16" cy="18.500" r="1.500" fill="#111" />
            </Pic>
          </IconButton>
          <IconButton aria-label="Volume muted">
            <Pic w={22} h={20} fill="none" stroke="#111" strokeWidth="1.500">
              <path d="M1 6.500h3.500L9 1.500v17l-4.500-5H1zM13 6l7 8M20 6l-7 8" />
            </Pic>
          </IconButton>
        </Tray>
        <Clock>
          <span>18:28</span>
          <span>06/03/2021</span>
        </Clock>
        <Notifications aria-label="1 new notification">
          <Pic w={42} h={42}>
            <path d="M0 6h24v19H12v6l-6-6H0z" />
            <path stroke="#fff" strokeWidth="1.500" d="M5 11.500h14M5 15.500h14M5 19.500h9" />
            <circle cx="24" cy="31" r="11" fill="#ddd" fillOpacity=".92" stroke="#888" />
            <text x="24" y="37" textAnchor="middle" fontSize="16" fontWeight="600">1</text>
          </Pic>
        </Notifications>
      </Taskbar>
    </Screen>
  );
}

export default App;
